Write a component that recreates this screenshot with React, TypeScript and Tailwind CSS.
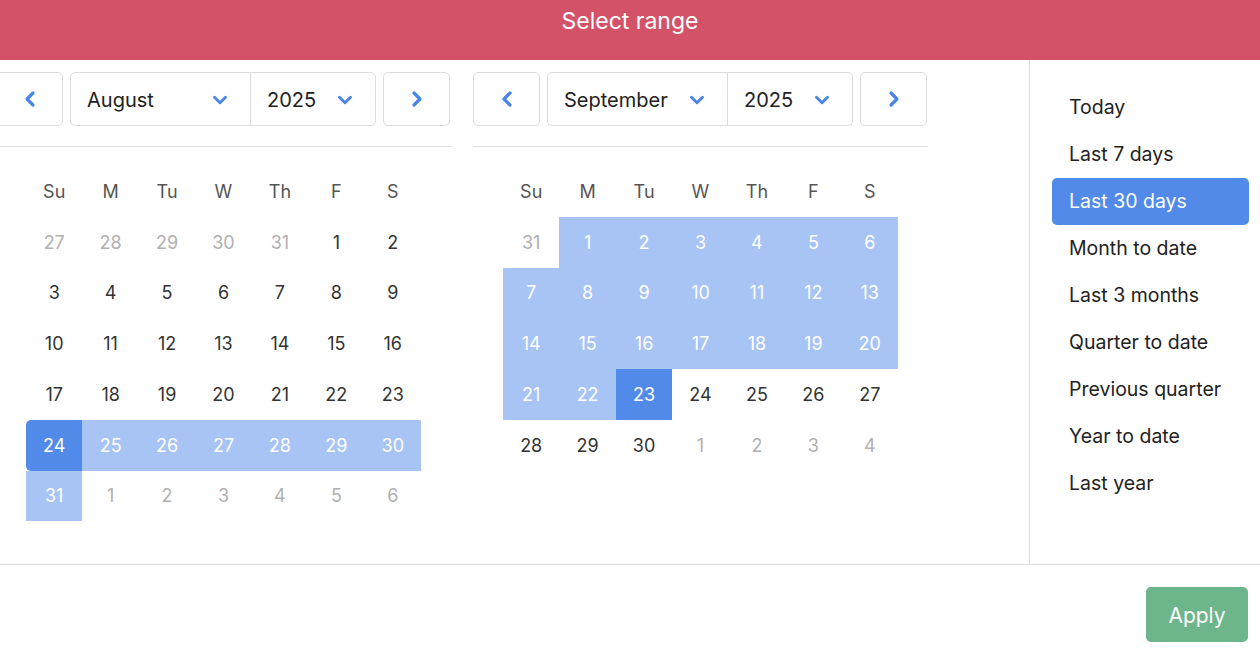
import { ChevronLeft, ChevronRight, ChevronDown } from 'lucide-react'

interface Day {
  n: number
  muted?: boolean
  state?: 'start' | 'end' | 'range'
}

const august: Day[][] = [
  [{ n: 27, muted: true }, { n: 28, muted: true }, { n: 29, muted: true }, { n: 30, muted: true }, { n: 31, muted: true }, { n: 1 }, { n: 2 }],
  [3, 4, 5, 6, 7, 8, 9].map(n => ({ n })),
  [10, 11, 12, 13, 14, 15, 16].map(n => ({ n })),
  [17, 18, 19, 20, 21, 22, 23].map(n => ({ n })),
  [{ n: 24, state: 'start' }, ...[25, 26, 27, 28, 29, 30].map(n => ({ n, state: 'range' as const }))],
  [{ n: 31, state: 'range' }, ...[1, 2, 3, 4, 5, 6].map(n => ({ n, muted: true }))],
]

const september: Day[][] = [
  [{ n: 31, muted: true }, ...[1, 2, 3, 4, 5, 6].map(n => ({ n, state: 'range' as const }))],
  [7, 8, 9, 10, 11, 12, 13].map(n => ({ n, state: 'range' as const })),
  [14, 15, 16, 17, 18, 19, 20].map(n => ({ n, state: 'range' as const })),
  [{ n: 21, state: 'range' }, { n: 22, state: 'range' }, { n: 23, state: 'end' }, { n: 24 }, { n: 25 }, { n: 26 }, { n: 27 }],
  [{ n: 28 }, { n: 29 }, { n: 30 }, ...[1, 2, 3, 4].map(n => ({ n, muted: true }))],
]

const weekdays = ['Su', 'M', 'Tu', 'W', 'Th', 'F', 'S']

const presets = [
  'Today',
  'Last 7 days',
  'Last 30 days',
  'Month to date',
  'Last 3 months',
  'Quarter to date',
  'Previous quarter',
  'Year to date',
  'Last year',
]

function DayCell({ day }: { day: Day }) {
  let cls = 'text-[#333]'
  if (day.muted) cls = 'text-[#b0b0b0]'
  if (day.state === 'range') cls = 'bg-[#a7c4f5] text-white'
  if (day.state === 'start') cls = 'bg-[#528aea] text-white rounded-l-[5px]'
  if (day.state === 'end') cls = 'bg-[#528aea] text-white'
  return (
    <div className={`h-[50.75px] flex items-center justify-center text-[18px] ${cls}`}>
      {day.n}
    </div>
  )
}

function Calendar({ month, year, weeks }: { month: string; year: string; weeks: Day[][] }) {
  return (
    <div className="w-[455px] shrink-0">
      <div className="mt-[12px] flex gap-[7px] h-[54px]">
        <button className="w-[67px] border border-[#dcdcdc] rounded-[5px] flex items-center justify-center text-[#4a86e8]">
          <ChevronLeft size={24} strokeWidth={3.2} />
        </button>
        <div className="flex border border-[#dcdcdc] rounded-[5px] text-[20px] text-[#222]">
          <div className="w-[180px] flex items-center justify-between pl-[16px] pr-[19px] pt-[2px] border-r border-[#dcdcdc]">
            <span>{month}</span>
            <ChevronDown size={22} strokeWidth={3.2} className="text-[#4a86e8]" />
          </div>
          <div className="w-[124px] flex items-center justify-between pl-[16px] pr-[19px] pt-[2px]">
            <span>{year}</span>
            <ChevronDown size={22} strokeWidth={3.2} className="text-[#4a86e8]" />
          </div>
        </div>
        <button className="w-[67px] border border-[#dcdcdc] rounded-[5px] flex items-center justify-center text-[#4a86e8]">
          <ChevronRight size={24} strokeWidth={3.2} />
        </button>
      </div>
      <div className="mt-[20px] border-t border-[#dedede]" />
      <div className="w-[395px] mx-auto pt-[19px]">
        <div className="grid grid-cols-7">
          {weekdays.map(d => (
            <div key={d} className="h-[50.75px] flex items-center justify-center text-[18px] text-[#555]">
              {d}
            </div>
          ))}
          {weeks.flat().map((d, i) => (
            <DayCell key={i} day={d} />
          ))}
        </div>
      </div>
    </div>
  )
}

export default function App() {
  return (
    <div
      className="w-[1260px] h-[672px] overflow-hidden bg-white flex flex-col"
      style={{ fontFamily: 'Inter, "Noto Sans", sans-serif' }}
    >
      <div className="h-[60px] shrink-0 bg-[#d35267] text-white text-[23px] text-center pt-[7px] leading-[28px]">
        Select range
      </div>
      <div className="h-[505px] shrink-0 flex border-b border-[#dedede]">
        <div className="w-[1029px] shrink-0 overflow-hidden">
          <div className="flex gap-[22px] -ml-[4px]">
            <Calendar month="August" year="2025" weeks={august} />
            <Calendar month="September" year="2025" weeks={september} />
          </div>
        </div>
        <div className="flex-1 border-l border-[#dedede] pt-[24px] pl-[22px] pr-[11px]">
          {presets.map(p => (
            <div
              key={p}
              className={`h-[47px] flex items-center pl-[17px] text-[19.5px] rounded-[5px] ${
                p === 'Last 30 days' ? 'bg-[#528aea] text-white' : 'text-[#222]'
              }`}
            >
              {p}
            </div>
          ))}
        </div>
      </div>
      <div className="flex-1 flex justify-end items-start pt-[22px] pr-[12px]">
        <button className="w-[102px] h-[55px] rounded-[5px] bg-[#6db58a] text-white text-[21px] pt-[2px]">
          Apply
        </button>
      </div>
    </div>
  )
}
